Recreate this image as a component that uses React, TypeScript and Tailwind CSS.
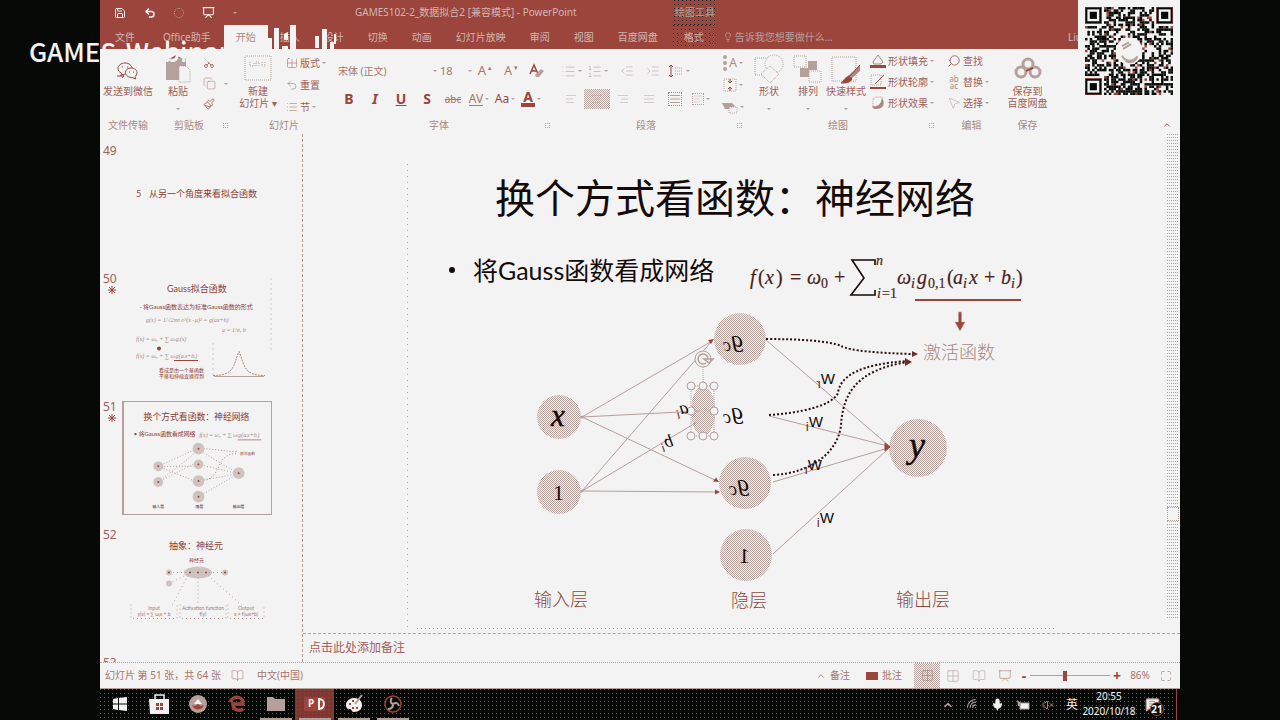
import type { ReactNode } from "react";
import {
  AlignCenter,
  AlignJustify,
  AlignLeft,
  AlignRight,
  BookOpen,
  ChevronUp,
  Copy,
  Grid2x2,
  IndentDecrease,
  IndentIncrease,
  Lightbulb,
  List,
  ListOrdered,
  Maximize,
  MessageSquareText,
  Mic,
  MousePointer2,
  Paintbrush,
  Presentation,
  Save,
  Scissors,
  Search,
  Undo2,
  VolumeX,
  Wifi,
} from "lucide-react";

function Caret() {
  return <span className="inline-block border-x-2 border-t-2 border-x-transparent border-t-[#b5a09c]" />;
}

function Group({ label, width, launcher, children }: { label: string; width: string; launcher?: boolean; children: ReactNode }) {
  return (
    <section className={`flex shrink-0 flex-col ${width}`}>
      <div className="flex h-[68px] items-start">{children}</div>
      <div className={`relative text-center text-[10px] leading-4 text-[#aa8882] ${launcher ? "pr-3" : ""}`}>
        {label}
        {launcher && (
          <button aria-label={`${label}选项`} className="absolute right-[6px] top-[6px] h-[5px] w-[5px] border border-dotted border-[#b5a09c]" />
        )}
      </div>
    </section>
  );
}

function IconButton({ label, active, children }: { label: string; active?: boolean; children: ReactNode }) {
  return (
    <button
      aria-label={label}
      className={`flex h-5 w-[26px] items-center justify-center gap-0.5 ${
        active ? "bg-[conic-gradient(#b5a09c_25%,transparent_0_50%,#b5a09c_0_75%,transparent_0)] bg-[length:2px_2px]" : ""
      }`}
    >
      {children}
    </button>
  );
}

function BigButton({ lines, width, icon, caret }: { lines: string[]; width: string; icon: ReactNode; caret?: boolean }) {
  return (
    <button className={`flex shrink-0 flex-col items-center text-[10px] leading-3 text-[#a05f57] ${width}`}>
      <span className="flex h-9 items-center justify-center">{icon}</span>
      {lines.map((line) => (
        <span key={line} className="whitespace-nowrap">{line}</span>
      ))}
      {caret && <span className="mt-1 leading-none"><Caret /></span>}
    </button>
  );
}

function RowButton({ icon, text, caret }: { icon: ReactNode; text: string; caret?: boolean }) {
  return (
    <button className="flex h-5 items-center gap-0.5 whitespace-nowrap text-[10px] text-[#a05f57]">
      {icon}
      {text}
      {caret && <Caret />}
    </button>
  );
}

const QR_SIZE = 37;

function qrModules() {
  const cells: { x: number; y: number; red: boolean }[] = [];
  let seed = 20201018;
  for (let y = 0; y < QR_SIZE; y++) {
    for (let x = 0; x < QR_SIZE; x++) {
      seed = (seed * 48271) % 2147483647;
      const finder = (x < 8 && y < 8) || (x > 28 && y < 8) || (x < 8 && y > 28);
      const align = x > 27 && x < 33 && y > 27 && y < 33;
      const logo = (x - 18) ** 2 + (y - 18) ** 2 < 32;
      if (!finder && !align && !logo && seed / 2147483647 < 0.52) {
        cells.push({ x, y, red: seed % 11 === 0 });
      }
    }
  }
  return cells;
}

const MODULES = qrModules();

function QrCode() {
  return (
    <svg viewBox="0 0 37 37" className="h-[88px] w-[88px]" role="img" aria-label="二维码">
      {MODULES.map((m) => (
        <rect key={`${m.x}-${m.y}`} x={m.x} y={m.y} width="1.05" height="1.05" fill={m.red ? "#9c453c" : "#060905"} />
      ))}
      {[[0, 0], [30, 0], [0, 30]].map(([x, y]) => (
        <g key={`${x}/${y}`}>
          <rect x={x + 0.5} y={y + 0.5} width="6" height="6" fill="#f3f3f3" stroke="#060905" />
          <rect x={x + 0.1} y={y + 0.1} width="6.8" height="6.8" fill="none" stroke="#9c453c" strokeWidth="0.3" />
          <rect x={x + 2} y={y + 2} width="3" height="3" fill="#060905" />
        </g>
      ))}
      <rect x="28.5" y="28.5" width="4" height="4" fill="#f3f3f3" stroke="#060905" />
      <rect x="30" y="30" width="1" height="1" fill="#060905" />
      <circle cx="18.5" cy="18.5" r="5.6" fill="#f3f3f3" />
      <path d="M15.5 16.5l3-1.6M16 17.6l3.400-2M15.5 20.500c1.500 2.600 4.500 2.800 6.600 0.200M17 22.800c2 .9 4 .3 5-1.600" stroke="#b5a09c" strokeWidth="0.8" fill="none" />
    </svg>
  );
}

function Dither({ id }: { id: string }) {
  return (
    <defs>
      <pattern id={id} width="2" height="2" patternUnits="userSpaceOnUse">
        <rect width="1" height="1" fill="#b5a09c" shapeRendering="crispEdges" />
        <rect x="1" y="1" width="1" height="1" fill="#b5a09c" shapeRendering="crispEdges" />
      </pattern>
    </defs>
  );
}

function Mirrored({ x, y, main, sub, size, subSize = 13, subColor = "#6e2d27", tilt = 0, className }: { x: number; y: number; main: string; sub?: string; size: number; subSize?: number; subColor?: string; tilt?: number; className: string }) {
  return (
    <text transform={`translate(${x} ${y}) rotate(${tilt}) scale(-1 1)`} fontSize={size} fill="#140a08" className={className}>
      {main}
      {sub && <tspan dy="4" fontSize={subSize} fill={subColor}>{sub}</tspan>}
    </text>
  );
}

const THIN_LINES = [
  [582, 417, 712, 341],
  [582, 417, 700, 411],
  [582, 417, 717, 481],
  [582, 491, 711, 342],
  [582, 491, 697, 422],
  [582, 491, 717, 492],
  [766, 340, 888, 445],
  [769, 416, 888, 446],
  [773, 482, 888, 448],
  [773, 554, 888, 449],
];

const NODES = [
  [559, 417, 22],
  [559, 492, 22],
  [740, 339, 26],
  [745, 483, 26],
  [746, 555, 26],
  [918, 448, 29],
];

const FORMULA: [string, number, number, number][] = [
  ["f", 750, 284, 20],
  ["(", 758, 284, 20],
  ["x", 765, 284, 20],
  [")", 776, 284, 20],
  ["=", 790, 284, 20],
  ["ω", 807, 284, 20],
  ["0", 821, 288, 14],
  ["+", 834, 284, 20],
  ["n", 876, 265, 14],
  ["i", 877, 298, 14],
  ["=1", 882, 298, 14],
  ["ω", 897, 284, 20],
  ["i", 911, 288, 14],
  ["g", 917, 284, 20],
  ["0,1", 928, 288, 14],
  ["(", 947, 284, 20],
  ["a", 953, 284, 20],
  ["i", 963, 288, 14],
  ["x", 969, 284, 20],
  ["+", 984, 284, 20],
  ["b", 1001, 284, 20],
  ["i", 1011, 288, 14],
  [")", 1016, 284, 20],
];

function Diagram() {
  return (
    <svg viewBox="407 137 656 492" className="absolute inset-0 h-full w-full">
      <Dither id="node-fill" />
      <path d="M407.500 164V628" stroke="#b5a09c" strokeDasharray="1 5" />
      <path d="M417 628.500H1054" stroke="#b5a09c" strokeDasharray="1 3" />
      <g fill="#4a1f1a" className="font-['Liberation_Serif',serif]">
        {FORMULA.map(([t, x, y, size]) => (
          <text key={`${t}${x}`} x={x} y={y} fontSize={size} stroke="#4a1f1a" strokeWidth="0.2" className={/[a-zω]/.test(t) ? "italic" : ""}>{t}</text>
        ))}
      </g>
      <path d="M875 265V260H852L864 278L851 295H875V290" fill="none" stroke="#140a08" strokeWidth="1.6" />
      <path d="M915 300H1021" stroke="#9c453c" strokeWidth="2" />
      <path d="M958.5 312h3v10h3.5l-5 9l-5-9h3.5z" fill="#9c453c" stroke="#b5a09c" strokeWidth="0.5" />

      <g stroke="#b5a09c" strokeWidth="1">
        {THIN_LINES.map(([a, b, c, d]) => (
          <line key={`${a}${b}${c}${d}`} x1={a} y1={b} x2={c} y2={d} />
        ))}
      </g>
      {NODES.map(([x, y, r]) => (
        <circle key={`${x}${y}`} cx={x} cy={y} r={r} fill="url(#node-fill)" />
      ))}
      <ellipse cx="703" cy="411" rx="12" ry="25" fill="url(#node-fill)" />
      <path d="M714 339l-6 1l3 4zM719 482l-6-.5l3-4zM720 492l-5-2.5v5z" fill="#9c453c" />
      <circle cx="582" cy="417" r="1.5" fill="#b5a09c" />
      <circle cx="582" cy="491" r="1.5" fill="#b5a09c" />
      <path d="M890 447l-5-4v8z" fill="#9c453c" stroke="#9c453c" />

      <g fill="none" stroke="#2a100d" strokeWidth="2" strokeDasharray="2 2">
        <path d="M766 339C800 339 830 341 841 346C850 351 880 353 912 354" />
        <path d="M769 415C800 413 832 406 838 393C840 376 860 364 908 361" />
        <path d="M773 475C812 473 838 452 841 425C843 395 855 370 908 362" />
      </g>
      <path d="M918 354l-6-3v6zM912 362l-7-4v8z" fill="#6e2d27" />

      <g fill="#f3f3f3" stroke="#b5a09c" strokeWidth="1">
        <path d="M703 367v16M691 386h23v50h-23z" fill="none" strokeDasharray="1 1" />
        {[[691, 386], [703, 386], [714, 386], [691, 411], [714, 411], [691, 436], [703, 436], [714, 436]].map(([x, y]) => (
          <circle key={`${x}${y}`} cx={x} cy={y} r="4" />
        ))}
        <circle cx="703" cy="359" r="8" />
        <path d="M708 358a5 5 0 1 0 -2 5M704 359h9l-4 4z" fill="none" strokeWidth="1.5" />
      </g>

      <g fill="#140a08" className="font-['Liberation_Serif',serif]">
        <text x="551" y="426" fontSize="31" stroke="#140a08" strokeWidth="0.5" className="italic">x</text>
        <text x="553" y="500" fontSize="22">1</text>
        <text x="909" y="457" fontSize="36" stroke="#140a08" strokeWidth="0.5" className="italic">y</text>
      </g>
      <Mirrored x={743} y={347} main="g" sub="c" size={24} subSize={18} subColor="#2a100d" className="font-['Liberation_Serif',serif] italic" />
      <Mirrored x={743} y={419} main="g" sub="c" size={24} subSize={18} subColor="#2a100d" className="font-['Liberation_Serif',serif] italic" />
      <Mirrored x={749} y={491} main="g" sub="c" size={24} subSize={18} subColor="#2a100d" className="font-['Liberation_Serif',serif] italic" />
      <Mirrored x={750} y={563} main="1" size={22} className="font-['Liberation_Serif',serif]" />
      <Mirrored x={689} y={413} main="a" sub="i" size={18} tilt={-8} className="font-['Liberation_Serif',serif] italic" />
      <Mirrored x={674} y={446} main="b" sub="i" size={18} tilt={-10} className="font-['Liberation_Serif',serif] italic" />
      <Mirrored x={835} y={384} main="W" sub="r" size={15} className="font-['Liberation_Sans',sans-serif]" />
      <Mirrored x={823} y={427} main="W" sub="i" size={15} className="font-['Liberation_Sans',sans-serif]" />
      <Mirrored x={822} y={470} main="W" sub="r" size={15} className="font-['Liberation_Sans',sans-serif]" />
      <Mirrored x={834} y={523} main="W" sub="i" size={15} className="font-['Liberation_Sans',sans-serif]" />

      <g fontSize="18" fill="#8d4a42" className="font-['Noto_Sans_CJK_SC',sans-serif] font-light">
        <text x="534" y="606">输入层</text>
        <text x="731" y="607">隐层</text>
        <text x="896" y="606">输出层</text>
        <text x="923" y="359" fill="#aa8882">激活函数</text>
      </g>
    </svg>
  );
}

function Thumbnail({ number, star, selected, children }: { number: number; star?: boolean; selected?: boolean; children?: ReactNode }) {
  return (
    <li className="flex h-32 shrink-0">
      <div className="w-[22px] shrink-0 pl-[3px] text-xs leading-3 text-[#a05f57]">
        {number}
        {star && (
          <svg viewBox="0 0 8 8" className="ml-[5px] mt-px h-2 w-2" stroke="#9c453c"><path d="M4 0v8M0 4h8M1 1l6 6M7 1l-6 6" /></svg>
        )}
      </div>
      <div className={`h-[114px] w-[150px] ${selected ? "border border-l-2 border-[#b5a09c]" : ""}`}>
        <svg viewBox="0 0 150 113" className="h-full w-full font-['Lato','Noto_Sans_CJK_SC',sans-serif]">{children}</svg>
      </div>
    </li>
  );
}

function ThumbnailPanel() {
  return (
    <ol className="flex w-[203px] shrink-0 flex-col overflow-hidden border-r border-dashed border-[#b5a09c] pt-[11px]">
      <Thumbnail number={49}>
        <text x="14" y="51" fontSize="9" fill="#9c453c">5</text>
        <text x="27" y="51" fontSize="9" fill="#8d3c34">从另一个角度来看拟合函数</text>
      </Thumbnail>
      <Thumbnail number={50} star>
        <text x="45" y="18" fontSize="9" fill="#8d3c34">Gauss拟合函数</text>
        <text x="18" y="35" fontSize="6" fill="#8d3c34">· 将Gauss函数表达为标准Gauss函数的形式</text>
        <g fill="#aa8882" fontSize="6" className="font-['Liberation_Serif',serif] italic">
          <text x="24" y="48">g(x) = 1/√2πσ e^(x−μ)² = g(ax+b)</text>
          <text x="100" y="58">a = 1/σ, b</text>
          <text x="14" y="67">f(x) = ω₀ + ∑ ωᵢgᵢ(x)</text>
          <text x="14" y="84">f(x) = ω₀ + ∑ ωᵢg(aᵢx+bᵢ)</text>
        </g>
        <path d="M52 87h24" stroke="#9c453c" fill="none" />
        <circle cx="37" cy="75" r="2" fill="#9c453c" />
        <text x="37" y="98" fontSize="5" fill="#8d3c34">看成是由一个基函数</text>
        <text x="37" y="104" fontSize="5" fill="#8d3c34">平移和伸缩变换得到</text>
        <path d="M91 70v33h52M149 5v75" stroke="#b5a09c" fill="none" strokeDasharray="1 4" />
        <path d="M91 102c22 0 20-10 26-24c6 14 4 24 26 24" stroke="#aa8882" fill="none" strokeDasharray="2 1" />
        <path d="M92 103h50" stroke="#b5a09c" />
      </Thumbnail>
      <Thumbnail number={51} star selected>
        <text x="20" y="18" fontSize="9" fill="#8d3c34">换个方式看函数：神经网络</text>
        <text x="10" y="34" fontSize="6" fill="#8d3c34">• 将Gauss函数看成网络</text>
        <text x="77" y="35" fontSize="6" fill="#aa8882" className="font-['Liberation_Serif',serif] italic">f(x) = ω₀ + ∑ ωᵢg(aᵢx+bᵢ)</text>
        <path d="M116 38h24" stroke="#aa8882" />
        <path d="M35 65L72 48M35 65h38M35 65L72 80M35 81L72 62M35 81L72 52M76 48L114 71M76 63L114 72M76 80L114 73M76 96L114 74" stroke="#b5a09c" strokeDasharray="1 2" fill="none" />
        <path d="M78 47c15 0 25 3 38 3M78 80c25-2 12-28 38-28" stroke="#aa8882" strokeDasharray="1 2" fill="none" />
        <text x="118" y="53" fontSize="4" fill="#9c453c">激活函数</text>
        {[[35, 65, 5], [35, 81, 5], [76, 47, 6], [76, 63, 5], [76, 80, 6], [76, 96, 6], [117, 72, 6]].map(([x, y, r]) => (
          <g key={`${x}${y}`}>
            <circle cx={x} cy={y} r={r} fill="#cfc3c1" />
            <circle cx={x} cy={y} r="1" fill="#9c453c" />
          </g>
        ))}
        <g fontSize="4" fill="#3a1612">
          <text x="29" y="108">输入层</text>
          <text x="73" y="108">隐层</text>
          <text x="111" y="108">输出层</text>
        </g>
      </Thumbnail>
      <Thumbnail number={52}>
        <text x="47" y="19" fontSize="9" fill="#8d3c34">抽象：神经元</text>
        <text x="67" y="32" fontSize="5" fill="#9c453c">神经元</text>
        <ellipse cx="76" cy="43" rx="14" ry="6" fill="#cfc3c1" />
        <path d="M47 43h56M47 54l18-9M66 46L50 76M76 48v28M86 46l34 30" stroke="#b5a09c" strokeDasharray="1 3" />
        {[[47, 43], [47, 54], [103, 43]].map(([x, y]) => <circle key={`${x}${y}`} cx={x} cy={y} r="3" fill="#cfc3c1" />)}
        {[47, 68, 76, 84, 103].map((x) => <circle key={x} cx={x} cy="43" r="1" fill="#9c453c" />)}
        <path d="M9 75v14h46V75M58 75v14h46V75M106 75v14h36V75" fill="none" stroke="#b5a09c" strokeDasharray="1 3" />
        <g fontSize="5" fill="#9c7a74" textAnchor="middle">
          <text x="32" y="80">Input</text>
          <text x="32" y="86">y(x) = ∑ ωᵢx + b</text>
          <text x="81" y="80">Activation function</text>
          <text x="81" y="86">f(y)</text>
          <text x="124" y="80">Output</text>
          <text x="124" y="86">x = f(ωx+b)</text>
        </g>
      </Thumbnail>
      <Thumbnail number={53} />
    </ol>
  );
}

function Ribbon() {
  return (
    <div className="flex h-[85px] shrink-0 overflow-hidden bg-[#f3f3f3]">
      <Group label="文件传输" width="w-14">
        <BigButton
          width="w-14"
          lines={["发送到微信"]}
          icon={
            <svg viewBox="0 0 24 20" className="mt-2 h-5 w-6" fill="#f3f3f3" stroke="#9c453c" strokeWidth="1">
              <path d="M9 2c4 0 7 2.5 7 5.5S13 13 9 13l-4 2l.5-3C3 11 2 9.5 2 7.5C2 4.5 5 2 9 2z" />
              <path d="M15 7c3.5 0 6 2 6 4.5S20 15 19 15.5l.5 2.5l-3-1.5c-4 0-7-2-7-5S12 7 15 7z" />
              <path d="M1 15h7M6 13l2 2l-2 2M6 6h1M11 6h1M13 11h1M17 11h1" />
            </svg>
          }
        />
      </Group>
      <Group label="剪贴板" width="w-[78px]" launcher>
        <BigButton
          width="w-[44px]"
          lines={["粘贴"]}
          caret
          icon={
            <svg viewBox="0 0 28 30" className="mt-1 h-[30px] w-7">
              <path d="M2 4h20v22H2z" fill="#b5a09c" />
              <path d="M7 4l5-3l5 3z" fill="#9c453c" />
              <path d="M15 12h7l4 4v12H15z" fill="#f3f3f3" stroke="#b5a09c" strokeDasharray="1 1" />
            </svg>
          }
        />
        <div className="flex flex-col gap-2 pl-[3px] pt-2 text-[#aa7a73]">
          <button aria-label="剪切"><Scissors size={12} className="-rotate-90" /></button>
          <button aria-label="复制" className="flex items-center gap-2"><Copy size={13} strokeWidth={1} /><Caret /></button>
          <button aria-label="格式刷"><Paintbrush size={12} /></button>
        </div>
      </Group>
      <Group label="幻灯片" width="w-[100px]">
        <div className="w-1" />
        <BigButton
          width="w-[40px]"
          lines={["新建", "幻灯片 ▾"]}
          icon={
            <svg viewBox="0 0 30 30" className="h-[30px] w-[30px]" fill="none" stroke="#b5a09c" strokeDasharray="1 1">
              <path d="M2 4h26v24H2zM7 10v4h4v-3M13 14v-4h3v4M19 10v4h3v-4" />
            </svg>
          }
        />
        <div className="flex flex-col gap-[2px] pl-2 pt-1">
          <RowButton icon={<Grid2x2 size={12} strokeWidth={1} />} text="版式" caret />
          <RowButton icon={<Undo2 size={12} strokeWidth={1} />} text="重置" />
          <RowButton icon={<List size={12} strokeWidth={1} />} text="节" caret />
        </div>
      </Group>
      <Group label="字体" width="w-[222px]" launcher>
        <div className="flex flex-col gap-2 pl-[2px] pt-3">
          <div className="flex h-5 items-center text-[11px] text-[#a8756c]">
            <select aria-label="字体" className="w-[97px] appearance-none bg-transparent pl-[2px] text-[10px]"><option>宋体 (正文)</option></select>
            <Caret />
            <select aria-label="字号" className="ml-[3px] w-[28px] appearance-none bg-transparent"><option>18</option></select>
            <Caret />
            <IconButton label="增大字号"><span className="text-[13px]">A</span><sup className="text-[7px]">▴</sup></IconButton>
            <IconButton label="减小字号"><span className="text-xs">A</span><sup className="text-[7px]">▾</sup></IconButton>
            <IconButton label="清除格式">
              <svg viewBox="0 0 16 16" className="h-4 w-4"><path d="M1 11L5 2l4 9M2.5 8h5" stroke="#9c453c" strokeWidth="1.5" fill="none" /><path d="M6 12l6-6l3 2l-5 6H7z" fill="#b5a09c" /></svg>
            </IconButton>
          </div>
          <div className="flex text-sm text-[#9c453c]">
            <IconButton label="加粗"><b>B</b></IconButton>
            <IconButton label="倾斜"><b className="italic">I</b></IconButton>
            <IconButton label="下划线"><b className="underline">U</b></IconButton>
            <IconButton label="阴影"><b>S</b></IconButton>
            <IconButton label="删除线"><s className="text-[10px] text-[#a8756c]">abc</s></IconButton>
            <IconButton label="字符间距"><span className="border-b border-[#a8756c] text-xs leading-3 text-[#a8756c]">AV</span><Caret /></IconButton>
            <IconButton label="更改大小写"><span className="text-xs">Aa</span><Caret /></IconButton>
            <IconButton label="字体颜色"><b className="border-b-4 border-[#9c453c] px-0.5 leading-3">A</b><Caret /></IconButton>
          </div>
        </div>
      </Group>
      <Group label="段落" width="w-[192px]" launcher>
        <div className="flex flex-col gap-2 pl-[2px] pt-3 text-[#b5a09c]">
          <div className="flex h-5 items-center">
            <IconButton label="项目符号"><List size={15} strokeWidth={1} /><Caret /></IconButton>
            <IconButton label="编号"><ListOrdered size={15} strokeWidth={1} /><Caret /></IconButton>
            <span className="w-1" />
            <IconButton label="减少缩进"><IndentDecrease size={14} strokeWidth={1} /></IconButton>
            <IconButton label="增加缩进"><IndentIncrease size={14} strokeWidth={1} /></IconButton>
            <IconButton label="行距">
              <svg viewBox="0 0 16 14" className="h-[14px] w-4"><path d="M3 1v12M1 3l2-2l2 2M1 11l2 2l2-2" stroke="#9c453c" fill="none" /><path d="M7 4h8M7 7h8M7 10h8" stroke="#b5a09c" strokeDasharray="1 1" /></svg>
              <Caret />
            </IconButton>
          </div>
          <div className="flex">
            <IconButton label="左对齐"><AlignLeft size={12} strokeWidth={1} /></IconButton>
            <IconButton label="居中" active><AlignCenter size={12} strokeWidth={1} /></IconButton>
            <IconButton label="右对齐"><AlignRight size={12} strokeWidth={1} /></IconButton>
            <IconButton label="两端对齐"><AlignJustify size={12} strokeWidth={1} /></IconButton>
            <IconButton label="分散对齐"><span className="border border-dotted border-[#aa8882]"><AlignJustify size={12} strokeWidth={2} /></span></IconButton>
            <IconButton label="分栏"><span className="border border-dotted border-[#b5a09c]"><AlignLeft size={10} strokeWidth={1} /></span><Caret /></IconButton>
          </div>
        </div>
        <div className="flex flex-col gap-[2px] pl-[6px] pt-1 text-[#aa8882]">
          <IconButton label="文字方向"><span className="border-l-4 border-dotted border-[#b5a09c] pl-0.5 text-xs leading-4">A</span><Caret /></IconButton>
          <IconButton label="对齐文本">
            <svg viewBox="0 0 14 14" className="h-[14px] w-[14px]" fill="none" stroke="#b5a09c"><path d="M1 1h12v12H1z" strokeDasharray="1 1" /><path d="M7 1v4M5 3l2 2l2-2M7 13V9M5 11l2-2l2 2" stroke="#9c453c" /></svg>
            <Caret />
          </IconButton>
          <IconButton label="转换为SmartArt">
            <svg viewBox="0 0 16 14" className="h-[14px] w-4"><path d="M0 3h10l3 3l-3 3H3z" fill="#b5a09c" /><path d="M7 7h8v6H7z" fill="#f3f3f3" stroke="#b5a09c" strokeDasharray="1 1" /></svg>
            <Caret />
          </IconButton>
        </div>
      </Group>
      <Group label="绘图" width="w-[192px]" launcher>
        <BigButton
          width="w-[42px]"
          lines={["形状"]}
          caret
          icon={
            <svg viewBox="0 0 30 30" className="mt-1 h-[30px] w-[30px]" fill="#f3f3f3" stroke="#b5a09c" strokeDasharray="1 1"><path d="M1 4h18v17H1z" /><circle cx="20" cy="10" r="9" /><path d="M16 12l9 8l-9 9l-9-9z" /></svg>
          }
        />
        <BigButton
          width="w-[36px]"
          lines={["排列"]}
          caret
          icon={
            <svg viewBox="0 0 30 30" className="mt-1 h-[30px] w-[30px]"><path d="M1 2h12v11H1zM16 17h12v11H16z" fill="none" stroke="#b5a09c" strokeDasharray="1 1" /><path d="M15 7h9v9h-9zM7 14h9v9H7z" fill="#b5a09c" /></svg>
          }
        />
        <BigButton
          width="w-[40px]"
          lines={["快速样式"]}
          caret
          icon={
            <svg viewBox="0 0 30 30" className="mt-1 h-[30px] w-[30px]"><path d="M1 3h24v24H1z" fill="none" stroke="#b5a09c" strokeDasharray="1 1" /><path d="M29 11v6l-9 8l-3-3z" fill="#aa8882" /><path d="M29 11l-10 11M18 22l3 3c-2 4-6 4-11 4c3-2 3-5 8-7z" fill="#9c453c" stroke="#9c453c" /></svg>
          }
        />
        <div className="flex flex-col gap-[1px] pl-1 pt-[2px]">
          <RowButton
            icon={<svg viewBox="0 0 16 16" className="h-4 w-4"><path d="M3 9l5-7l5 7l-2 2H4z" fill="none" stroke="#aa8882" /><path d="M0 12h16v3H0z" fill="#9c453c" /></svg>}
            text="形状填充"
            caret
          />
          <RowButton
            icon={<svg viewBox="0 0 16 16" className="h-4 w-4"><path d="M1 1h10v10H1z" fill="none" stroke="#b5a09c" strokeDasharray="1 1" /><path d="M14 1L5 10" stroke="#9c453c" /><path d="M0 14h16" stroke="#9c453c" strokeWidth="2" /></svg>}
            text="形状轮廓"
            caret
          />
          <RowButton
            icon={<svg viewBox="0 0 16 16" className="h-4 w-4"><path d="M3 4l3-2h6v8l-3 3H3z" fill="#f3f3f3" stroke="#b5a09c" strokeDasharray="1 1" /><path d="M12 3c4 6 1 12-8 11l-2-3c5 1 9-1 10-8z" fill="#aa8882" /></svg>}
            text="形状效果"
            caret
          />
        </div>
      </Group>
      <Group label="编辑" width="w-[63px]">
        <div className="flex flex-col gap-[1px] pl-[7px] pt-[2px]">
          <RowButton icon={<Search size={14} strokeWidth={1.5} className="-scale-x-100" />} text="查找" />
          <RowButton icon={<span className="w-[14px] whitespace-normal text-[8px] leading-[7px] text-[#aa8882]">ab ac</span>} text="替换" caret />
          <RowButton icon={<MousePointer2 size={14} strokeWidth={1} className="text-[#b5a09c]" />} text="选择" caret />
        </div>
      </Group>
      <Group label="保存" width="w-[49px]">
        <BigButton
          width="w-[49px]"
          lines={["保存到", "百度网盘"]}
          icon={
            <svg viewBox="0 0 28 24" className="mt-1 h-6 w-7" fill="none" stroke="#b5a09c" strokeWidth="3"><circle cx="14" cy="7" r="5" /><circle cx="7" cy="15" r="5" /><circle cx="21" cy="15" r="5" /><path d="M12 14l7-3" stroke="#9c453c" strokeWidth="1.5" /></svg>
          }
        />
      </Group>
      <button aria-label="折叠功能区" className="ml-auto mr-2 self-end pb-1 text-[#9c453c]"><ChevronUp size={10} /></button>
    </div>
  );
}

const TABS = ["插入", "设计", "切换", "动画", "幻灯片放映", "审阅", "视图", "百度网盘"];

function TitleAndTabs() {
  return (
    <header className="shrink-0 bg-[#9c453c] text-[10px] text-[#cdb7b3]">
      <div className="flex h-[25px] items-center">
        <div className="flex w-[255px] shrink-0 items-center gap-[18px] pl-[14px] text-[#f3f3f3]">
          <button aria-label="保存"><Save size={12} /></button>
          <button aria-label="撤消"><Undo2 size={12} strokeWidth={3} /></button>
          <button aria-label="重复" className="h-[10px] w-[10px] rounded-full border border-dotted border-[#b5a09c]" />
          <button aria-label="从头开始"><Presentation size={13} /></button>
          <Caret />
        </div>
        <h1 className="w-[319px] shrink-0 whitespace-nowrap font-['Noto_Sans','Noto_Sans_CJK_SC',sans-serif]">GAMES102-2_数据拟合2 [兼容模式] - PowerPoint</h1>
        <span className="flex h-full w-[42px] items-center justify-center whitespace-nowrap bg-[conic-gradient(at_1px_1px,transparent_75%,#060905_0)] bg-[length:4px_4px] text-[#b5a09c]">绘图工具</span>
      </div>
      <nav className="flex h-6 items-stretch">
        <button className="px-[15px]">文件</button>
        <button className="px-[13px]">Office助手</button>
        <button className="bg-[#f3f3f3] px-3 text-[#aa8882]">开始</button>
        {TABS.map((t) => (
          <button key={t} className="px-3">{t}</button>
        ))}
        <button className="ml-[3px] w-[42px] bg-[conic-gradient(at_1px_1px,transparent_75%,#060905_0)] bg-[length:4px_4px]">格式</button>
        <label className="ml-2 flex items-center gap-0.5 text-[#b5a09c]">
          <Lightbulb size={10} />
          <input aria-label="操作说明搜索" placeholder="告诉我您想要做什么..." className="w-32 bg-transparent placeholder:text-[#b5a09c]" />
        </label>
        <button className="ml-auto mr-[98px]">Liu</button>
      </nav>
    </header>
  );
}

function StatusBar() {
  return (
    <footer className="flex h-[26px] shrink-0 items-center border-t border-dotted border-[#b5a09c] bg-[#f3f3f3] text-[10px] text-[#a8756c]">
      <span className="w-[127px] pl-[5px]">幻灯片 第 51 张，共 64 张</span>
      <button aria-label="拼写检查" className="mx-1"><BookOpen size={13} strokeWidth={1} /></button>
      <span className="pl-[9px]">中文(中国)</span>
      <button className="ml-auto flex items-center gap-1 px-2"><ChevronUp size={10} />备注</button>
      <button className="flex items-center gap-1 px-2"><span className="h-2 w-3 bg-[#9c453c]" />批注</button>
      <button aria-label="普通视图" className="ml-1 flex h-[25px] w-[26px] items-center justify-center bg-[conic-gradient(#b5a09c_25%,transparent_0_50%,#b5a09c_0_75%,transparent_0)] bg-[length:2px_2px]">
        <Grid2x2 size={13} strokeWidth={1} />
      </button>
      <button aria-label="幻灯片浏览" className="w-[26px] pl-[6px] text-[#b5a09c]"><Grid2x2 size={14} strokeWidth={1} /></button>
      <button aria-label="阅读视图" className="w-[26px] pl-[6px] text-[#b5a09c]"><BookOpen size={14} strokeWidth={1} /></button>
      <button aria-label="幻灯片放映" className="w-[26px] pl-[6px]"><Presentation size={14} strokeWidth={1} /></button>
      <button aria-label="缩小" className="w-3 text-sm font-bold text-[#9c453c]">-</button>
      <input
        type="range"
        aria-label="显示比例"
        defaultValue={43}
        className="h-3 w-[80px] appearance-none bg-[linear-gradient(#b5a09c,#b5a09c)] bg-[length:100%_1px] bg-center bg-no-repeat [&::-webkit-slider-thumb]:h-[10px] [&::-webkit-slider-thumb]:w-[4px] [&::-webkit-slider-thumb]:appearance-none [&::-webkit-slider-thumb]:bg-[#9c453c]"
      />
      <button aria-label="放大" className="w-[14px] text-sm font-bold text-[#9c453c]">+</button>
      <span className="w-8 text-center">86%</span>
      <button aria-label="适应窗口" className="ml-1 mr-2 text-[#b5a09c]"><Maximize size={12} /></button>
    </footer>
  );
}

function Task({ label, open, active, children }: { label: string; open?: boolean; active?: boolean; children: ReactNode }) {
  return (
    <button
      aria-label={label}
      className={`flex w-[39px] flex-col items-center ${active ? "bg-[#9c453c]/80" : ""}`}
    >
      <span className="flex flex-1 items-center">{children}</span>
      <span className={`h-[2px] w-8 ${open ? "bg-[#b5a09c]" : ""}`} />
    </button>
  );
}

function Taskbar() {
  return (
    <div className="flex h-8 shrink-0 items-stretch border-t border-[#b5a09c] bg-[#060905] bg-[conic-gradient(at_1px_1px,transparent_75%,#9c453c_0)] bg-[length:4px_4px] text-[#f3f3f3]">
      <Task label="开始菜单">
        <svg viewBox="0 0 14 14" className="h-[14px] w-[14px]" fill="#f3f3f3"><path d="M0 2l5-1v5.5H0zM6 1l8-1v6.5H6zM0 7.5h5V13l-5-1zM6 7.5h8V14l-8-1z" /></svg>
      </Task>
      <Task label="应用商店">
        <svg viewBox="0 0 20 20" className="h-5 w-5"><path d="M6 6V1h9v5" fill="none" stroke="#f3f3f3" strokeWidth="1.5" /><path d="M0 5h20v15H1z" fill="#f3f3f3" /><path d="M7 9h3v3H7zM11 9h3v3h-3zM7 13h3v3H7zM11 13h3v3h-3z" fill="#9c453c" /></svg>
      </Task>
      <Task label="浏览器">
        <svg viewBox="0 0 18 18" className="h-[18px] w-[18px]"><circle cx="9" cy="9" r="9" fill="#b5a09c" /><path d="M3 10c2 6 10 6 12 0l-3 1l-3-2l-3 2z" fill="#9c453c" /><path d="M9 4l4 5H5z" fill="#f3f3f3" /></svg>
      </Task>
      <Task label="Edge">
        <svg viewBox="0 0 18 18" className="h-[18px] w-[18px]" fill="none" stroke="#9c453c" strokeWidth="3.5"><path d="M2 7c3-7 14-6 13 2H5c0 7 7 7 10 5" /></svg>
      </Task>
      <Task label="文件资源管理器" open>
        <svg viewBox="0 0 18 15" className="h-[15px] w-[18px]" fill="#b5a09c"><path d="M0 1h6l2 2h10v12H0z" /></svg>
      </Task>
      <Task label="PowerPoint" open active>
        <span className="flex h-[14px] items-center bg-[#9c453c] pl-1 text-[10px] font-bold">P<span className="ml-1 h-3 w-[7px] rounded-r-full border-2 border-[#f3f3f3]" /></span>
      </Task>
      <Task label="画图" open>
        <svg viewBox="0 0 18 18" className="h-[18px] w-[18px]"><path d="M9 3c5 0 8 3 8 7s-3 7-8 7c-3 0-2-3-4-3s-4 0-4-4s4-7 8-7z" fill="#f3f3f3" /><path d="M17 0l-7 9" stroke="#b5a09c" strokeWidth="2" /><path d="M4 9h2M7 6h2M11 13h2M7 13h2" stroke="#9c453c" strokeWidth="2" /></svg>
      </Task>
      <Task label="OBS" open>
        <svg viewBox="0 0 18 18" className="h-[18px] w-[18px]" fill="none" stroke="#b5a09c"><circle cx="9" cy="9" r="8" fill="#060905" stroke="#9c453c" strokeWidth="1.5" /><path d="M9 9c-3-1-3-4-1-6M9 9c3-2 5-1 6 2M9 9c0 3-2 5-5 5" strokeWidth="2" /></svg>
      </Task>
      <div className="ml-auto flex items-center gap-3 text-[#b5a09c]">
        <ChevronUp size={12} strokeWidth={3} />
        <Wifi size={13} className="-rotate-45" />
        <Mic size={13} fill="#f3f3f3" className="text-[#f3f3f3]" />
        <svg viewBox="0 0 14 12" className="h-3 w-[14px]"><path d="M4 4h9v6H4z" fill="#f3f3f3" stroke="#b5a09c" /><path d="M1 1l4 3v3H2z" fill="#b5a09c" /></svg>
        <VolumeX size={12} className="text-[#c0736b]" />
        <span className="text-xs text-[#f3f3f3]">英</span>
      </div>
      <time className="ml-[3px] w-[56px] text-center text-[10px] leading-[15px] text-[#f3f3f3]">
        20:55<br />2020/10/18
      </time>
      <button aria-label="通知" className="relative ml-2 w-[31px]">
        <MessageSquareText size={15} fill="#f3f3f3" className="text-[#b5a09c]" />
        <span className="absolute bottom-1 left-[5px] flex h-[14px] w-[14px] items-center justify-center rounded-full border border-[#9c453c] bg-[#060905] text-[10px] font-bold">21</span>
      </button>
      <span className="mr-[3px] w-px bg-[#9c453c]" />
    </div>
  );
}

export default function App() {
  return (
    <div className="relative flex h-screen flex-col overflow-hidden bg-[#060905] px-[100px] font-['Noto_Sans','Noto_Sans_CJK_SC',sans-serif]">
      <TitleAndTabs />
      <Ribbon />
      <div className="flex min-h-0 flex-1 bg-[#f3f3f3]">
        <ThumbnailPanel />
        <main className="flex min-w-0 flex-1 flex-col">
          <div className="flex min-h-0 flex-1">
            <div className="flex min-w-0 flex-1 justify-center pt-[3px]">
              <article className="relative h-[492px] w-[656px] shrink-0 font-['Lato','Noto_Sans_CJK_SC',sans-serif] text-[#140a08]">
                <Diagram />
                <h2 className="pt-[31px] text-center text-[40px] leading-[60px]">换个方式看函数：神经网络</h2>
                <ul className="pl-[42px] pt-[24px]">
                  <li className="flex items-center gap-[18px] text-[25px] leading-9">
                    <span className="h-[6px] w-[6px] rounded-full bg-[#140a08]" />
                    将Gauss函数看成网络
                  </li>
                </ul>
              </article>
            </div>
            <div aria-hidden className="mb-[15px] mr-px w-3 bg-[conic-gradient(at_1px_1px,transparent_75%,#b5a09c_0)] bg-[length:2px_3px] pt-[373px]">
              <div className="h-[14px] border border-dotted border-[#b5a09c] bg-[#f3f3f3]" />
            </div>
          </div>
          <div className="h-[29px] shrink-0 border-t border-dashed border-[#b5a09c]">
            <input aria-label="备注" placeholder="点击此处添加备注" className="w-full bg-transparent pl-[6px] text-xs leading-6 placeholder:text-[#a05f57]" />
          </div>
        </main>
      </div>
      <StatusBar />
      <Taskbar />

      <div className="absolute right-[100px] top-0 h-[104px] w-[102px] bg-[#f3f3f3] pl-[7px] pt-[7px]">
        <QrCode />
      </div>
      <div className="pointer-events-none absolute left-[29px] top-[24px] flex items-start text-[#f3f3f3]">
        <span className="w-[236px] whitespace-nowrap pt-[9px] font-['Noto_Sans_CJK_SC',sans-serif] text-[26px] font-medium leading-9">GAMES-Webinar</span>
        <svg viewBox="0 0 74 36" className="h-9 w-[74px]" fill="#f3f3f3">
          <path d="M9 4h5v32H9zM3 14h4v11h-4zM25 1l6 0v34h-6zM19 10l4-2v8h-4zM17 22h6v12h-6zM57 5l5 0v30h-5zM50 12h4v12h-4zM65 18h4v16h-4zM69 10h2v10h-2z" />
        </svg>
      </div>
    </div>
  );
}
